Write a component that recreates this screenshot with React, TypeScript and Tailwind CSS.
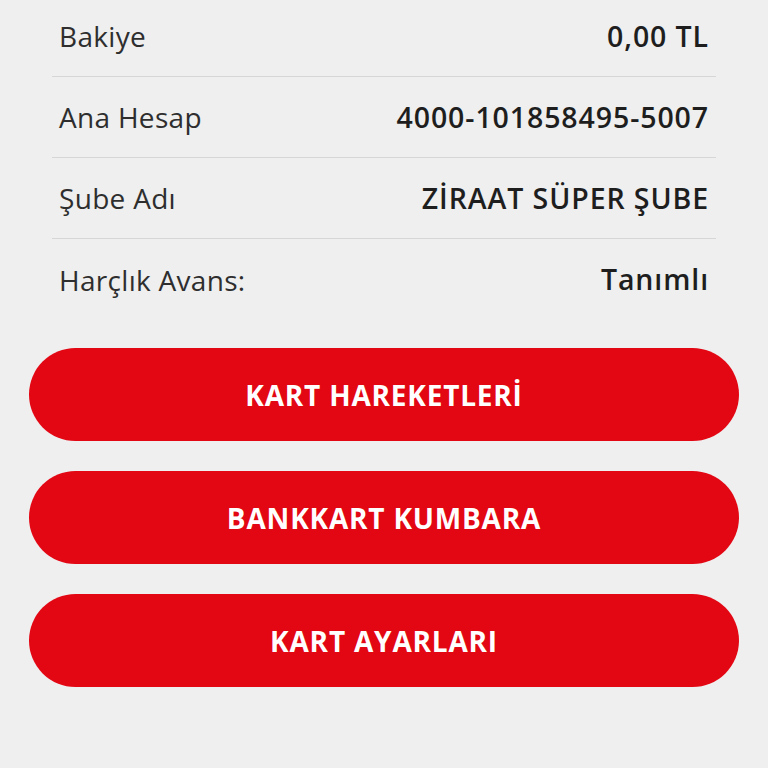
import React from 'react';

const rows = [
  { label: 'Bakiye', value: '0,00 TL' },
  { label: 'Ana Hesap', value: '4000-101858495-5007' },
  { label: 'Şube Adı', value: 'ZİRAAT SÜPER ŞUBE' },
  { label: 'Harçlık Avans:', value: 'Tanımlı' },
];

const actions = ['KART HAREKETLERİ', 'BANKKART KUMBARA', 'KART AYARLARI'];

export default function App() {
  return (
    <div
      className="h-[768px] w-[768px] overflow-hidden bg-[#efefef]"
      style={{ fontFamily: '"Open Sans", "Noto Sans", sans-serif' }}
    >
      <div className="mx-[52px] -mt-[4px]">
        {rows.map((r, i) => (
          <div
            key={r.label}
            className={`flex h-[81px] items-center justify-between px-[7px] ${
              i < rows.length - 1 ? 'border-b border-[#d6d6d6]' : ''
            }`}
          >
            <span className="text-[28px] tracking-[0.3px] text-[#2e2e2e]">{r.label}</span>
            <span className="text-[28.5px] font-semibold tracking-[0.9px] text-[#1e1e1e]">{r.value}</span>
          </div>
        ))}
      </div>

      <div className="mx-[29px] mt-[28px] flex flex-col gap-[30px]">
        {actions.map((a) => (
          <button
            key={a}
            className="flex h-[93px] w-full items-center justify-center rounded-full bg-[#e30613] text-[28px] font-bold tracking-[0.8px] text-white"
          >
            {a}
          </button>
        ))}
      </div>
    </div>
  );
}
